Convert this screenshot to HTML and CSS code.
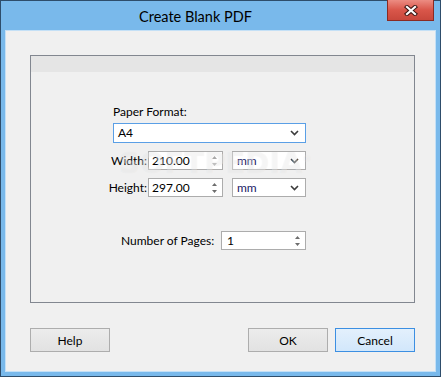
FILE: index.html
```html
<!DOCTYPE html>
<html>
<head>
    <title>Create Blank PDF</title>
    <link rel="stylesheet" href="styles.css">
</head>
<body>
    <div class="window">
        <div class="title-bar">
            <span class="title">Create Blank PDF</span>
            <button class="close-button">
                <svg width="14" height="11" viewBox="0 0 14 11">
                    <path d="M3 2 L11 9 M11 2 L3 9" stroke="#3b1512" stroke-width="4.2" stroke-linecap="square"/>
                    <path d="M3 2 L11 9 M11 2 L3 9" stroke="#ffffff" stroke-width="2.2" stroke-linecap="square"/>
                </svg>
            </button>
        </div>

        <div class="client">
            <div class="group-box">
                <div class="group-header"></div>
                <div class="form">
                    <label class="field-label">Paper Format:</label>
                    <div class="select wide focused">
                        <span>A4</span>
                        <svg class="chevron" width="9" height="6" viewBox="0 0 9 6"><path d="M1 1 L4.5 4.5 L8 1" fill="none" stroke="#3c3c3c" stroke-width="1.6"/></svg>
                    </div>

                    <div class="size-row">
                        <label class="size-label">Width:</label>
                        <div class="spin">
                            <span>210.00</span>
                            <span class="spin-arrows">
                                <svg width="7" height="12" viewBox="0 0 7 12"><path d="M3.5 1 L6 4 L1 4 Z M3.5 11 L6 8 L1 8 Z" fill="#a8a8a8"/></svg>
                            </span>
                        </div>
                        <div class="select unit">
                            <span>mm</span>
                            <svg class="chevron" width="9" height="6" viewBox="0 0 9 6"><path d="M1 1 L4.5 4.5 L8 1" fill="none" stroke="#3c3c3c" stroke-width="1.6"/></svg>
                        </div>
                    </div>

                    <div class="size-row">
                        <label class="size-label">Height:</label>
                        <div class="spin">
                            <span>297.00</span>
                            <span class="spin-arrows">
                                <svg width="7" height="12" viewBox="0 0 7 12"><path d="M3.5 1 L6 4 L1 4 Z M3.5 11 L6 8 L1 8 Z" fill="#6e6e6e"/></svg>
                            </span>
                        </div>
                        <div class="select unit">
                            <span>mm</span>
                            <svg class="chevron" width="9" height="6" viewBox="0 0 9 6"><path d="M1 1 L4.5 4.5 L8 1" fill="none" stroke="#3c3c3c" stroke-width="1.6"/></svg>
                        </div>
                    </div>

                    <div class="pages-row">
                        <label class="pages-label">Number of Pages:</label>
                        <div class="spin pages">
                            <span>1</span>
                            <span class="spin-arrows">
                                <svg width="7" height="12" viewBox="0 0 7 12"><path d="M3.5 1 L6 4 L1 4 Z M3.5 11 L6 8 L1 8 Z" fill="#6e6e6e"/></svg>
                            </span>
                        </div>
                    </div>
                </div>
                <span class="watermark">SOFTPEDIA<sup>®</sup></span>
            </div>

            <div class="button-row">
                <button class="dialog-button">Help</button>
                <div class="right-buttons">
                    <button class="dialog-button">OK</button>
                    <button class="dialog-button default">Cancel</button>
                </div>
            </div>
        </div>
    </div>
</body>
</html>
```

FILE: styles.css
```css
* {
    margin: 0px;
    padding: 0px;
    box-sizing: border-box;
}

body {
    font-family: 'Lato', 'Liberation Sans', sans-serif;
    font-size: 12px;
    color: #000;
}

.window {
    position: relative;
    width: 441px;
    height: 377px;
    background-color: #79b9eb;
    border: 1px solid #2e4d6b;
    padding: 0 4px 4px 4px;
    display: flex;
    flex-direction: column;
}

.title-bar {
    height: 29px;
    display: flex;
    align-items: center;
    justify-content: center;
}

.title {
    font-size: 14.5px;
    color: #000;
    margin-left: -50px;
    margin-top: 1px;
}

.close-button {
    position: absolute;
    top: -1px;
    right: 6px;
    width: 47px;
    height: 21px;
    border: 1px solid #8a2a22;
    border-top: none;
    background: linear-gradient(#ec8c82, #d9564a 50%, #c8473c);
    display: flex;
    align-items: center;
    justify-content: center;
}

.client {
    flex: 1;
    background-color: #f0f0f0;
    border: 1px solid #c4e0f6;
    display: flex;
    flex-direction: column;
}

.group-box {
    position: relative;
    margin: 24px 20px 0 24px;
    height: 248px;
    border: 1px solid #828790;
}

.group-header {
    height: 16px;
    background-color: #e5e5e5;
}

.form {
    padding: 32px 0 0 82px;
    width: 276px;
}

label {
    white-space: nowrap;
}

.field-label {
    display: block;
    line-height: 16px;
}

.select {
    height: 19px;
    background-color: #fff;
    border: 1px solid #acacac;
    display: flex;
    align-items: center;
    justify-content: space-between;
    padding: 0 6px 0 4px;
    line-height: 16px;
    flex-shrink: 0;
}

.select.wide {
    margin-top: 3px;
    height: 20px;
    width: 193px;
}

.select.focused {
    border-color: #5a9fe6;
}

.select.unit {
    width: 74px;
    margin-left: 9px;
}

.select.unit span {
    color: #1a1a66;
}

.size-row {
    display: flex;
    align-items: center;
    margin-top: 8px;
    margin-left: -15px;
    height: 19px;
}

.size-label {
    width: 50px;
    flex-shrink: 0;
    text-align: right;
    padding-right: 1px;
}

.spin {
    height: 19px;
    width: 75px;
    flex-shrink: 0;
    background-color: #fff;
    border: 1px solid #acacac;
    display: flex;
    align-items: center;
    justify-content: space-between;
    padding: 0 4px 0 3px;
    line-height: 16px;
}

.spin-arrows {
    display: flex;
    align-items: center;
}

.pages-row {
    display: flex;
    align-items: center;
    margin-top: 34px;
    width: 193px;
    height: 19px;
}

.pages-label {
    padding-left: 8px;
}

.spin.pages {
    width: 85px;
    margin-left: auto;
    padding-left: 5px;
}

.watermark {
    position: absolute;
    left: 88px;
    top: 90px;
    font-family: 'DejaVu Sans', sans-serif;
    font-weight: bold;
    font-size: 29px;
    color: rgba(255, 255, 255, 0.35);
    text-shadow: 0 0 1px rgba(0, 0, 0, 0.06);
    pointer-events: none;
}

.watermark sup {
    font-size: 9px;
}

.button-row {
    display: flex;
    justify-content: space-between;
    margin: 25px 20px 0 24px;
}

.right-buttons {
    display: flex;
    gap: 7px;
}

.dialog-button {
    width: 80px;
    height: 24px;
    font-family: 'Lato', 'Liberation Sans', sans-serif;
    font-size: 12px;
    color: #000;
    background: linear-gradient(#ececec, #e2e2e2);
    border: 1px solid #adadad;
}

.dialog-button.default {
    background: linear-gradient(#e3f0fc, #d2e7fb);
    border-color: #3c8fe2;
}
```
